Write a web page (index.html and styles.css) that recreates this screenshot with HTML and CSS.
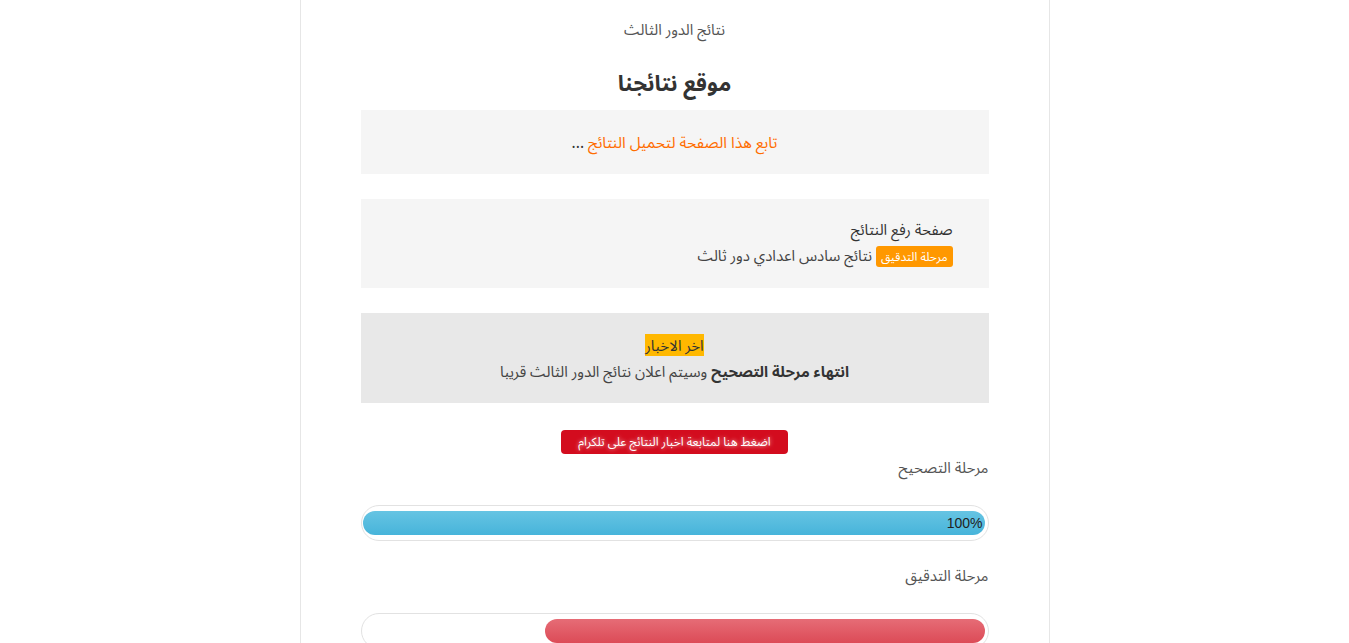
FILE: index.html
```html
<!DOCTYPE html>
<html lang="ar" dir="rtl">
<head>
<meta charset="utf-8">
<title>موقع نتائجنا</title>
<link rel="stylesheet" href="styles.css">
</head>
<body>
<div class="page">
  <div class="top">نتائج الدور الثالث</div>
  <h1 class="title">موقع نتائجنا</h1>
  <div class="box box-follow"><span class="orange">تابع هذا الصفحة لتحميل النتائج</span> ...</div>
  <div class="box box-upload">
    <div class="line1">صفحة رفع النتائج</div>
    <div class="line2"><span class="badge">مرحلة التدقيق</span> نتائج سادس اعدادي دور ثالث</div>
  </div>
  <div class="box box-news">
    <div class="news-title"><span class="hl">اخر الاخبار</span></div>
    <div class="news-text"><b>انتهاء مرحلة التصحيح</b> وسيتم اعلان نتائج الدور الثالث قريبا</div>
  </div>
  <div class="btn-row"><a class="btn">اضغط هنا لمتابعة اخبار النتائج على تلكرام</a></div>
  <div class="stage">مرحلة التصحيح</div>
  <div class="progress"><div class="bar blue" style="width:100%"><span class="pct">100%</span></div></div>
  <div class="stage">مرحلة التدقيق</div>
  <div class="progress"><div class="bar red" style="width:70.6%"></div></div>
</div>
</body>
</html>
```
FILE: styles.css
```css
html, body { margin: 0; padding: 0; background: #fff; }
body { font-family: "Noto Sans", "Noto Sans Arabic", sans-serif; color: #444; font-size: 15px; }
.page {
  width: 628px;
  margin: 0 auto;
  padding: 0 60px 40px;
  border-left: 1px solid #e6e6e6;
  border-right: 1px solid #e6e6e6;
  min-height: 700px;
}
.top { text-align: center; padding-top: 18px; height: 22px; line-height: 22px; color: #555; font-size: 15px; }
.title { text-align: center; margin: 0; padding-top: 28px; height: 42px; line-height: 28px; font-size: 22px; color: #333; font-weight: bold; }
.box { background: #f5f5f5; }
.box-follow { height: 64px; line-height: 64px; text-align: center; color: #333; font-size: 15.5px; }
.orange { color: #ff6d00; }
.box-upload { margin-top: 25px; padding: 18px 36px 19px; height: 52px; color: #333; font-size: 15px; }
.line1 { line-height: 24px; }
.line2 { line-height: 28px; color: #444; }
.badge { background: #ff9800; color: #fff; font-size: 12px; padding: 2px 5px; border-radius: 3px; }
.box-news { margin-top: 25px; background: #e8e8e8; height: 90px; text-align: center; }
.news-title { padding-top: 22px; line-height: 20px; color: #333; }
.hl { background: #ffb800; padding: 1px 0; }
.news-text { line-height: 32px; color: #444; }
.news-text b { color: #333; }
.btn-row { text-align: center; margin-top: 27px; height: 24px; }
.btn {
  display: inline-block; background: #d30c1e; color: #fff; font-size: 12px;
  padding: 0 17px; height: 24px; line-height: 24px; border-radius: 4px;
  text-shadow: 0 0 4px rgba(255,255,255,0.8);
}
.stage { line-height: 26px; color: #555; font-size: 15px; }
.progress {
  margin-top: 25px; margin-bottom: 21px;
  height: 24px; padding: 5px 3px 5px 1px; border: 1px solid #e2e2e2; border-radius: 18px;
}
.bar { height: 24px; border-radius: 12px; position: relative; }
.blue { background: linear-gradient(#66c4e3, #47b4da); }
.red { background: linear-gradient(#e66c76, #dc4b57); }
.pct { position: absolute; right: 2px; top: 0; line-height: 24px; font-family: "Liberation Sans", sans-serif; font-size: 14px; color: #222; }
```
